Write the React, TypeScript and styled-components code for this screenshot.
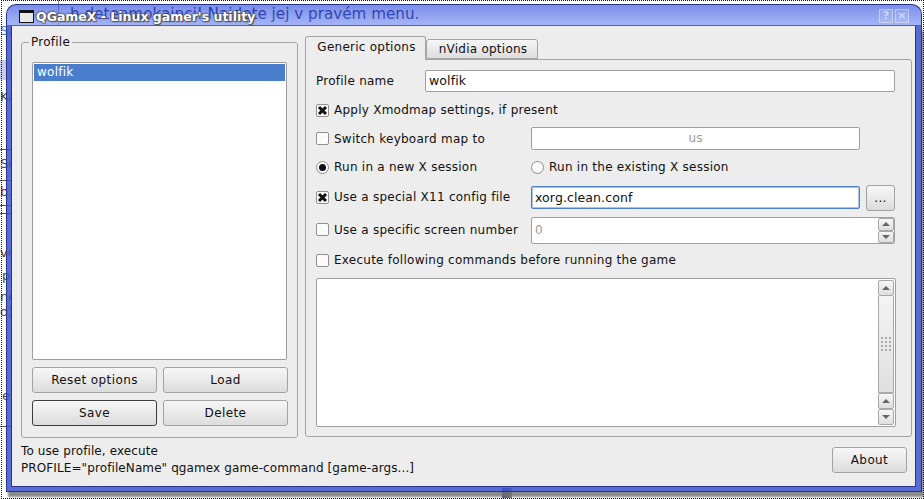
import styled, { createGlobalStyle } from 'styled-components'

const GlobalStyle = createGlobalStyle`
  html, body {
    margin: 0;
    padding: 0;
    background: #fff;
  }
  * {
    box-sizing: border-box;
  }
`

const Desktop = styled.div`
  position: relative;
  width: 924px;
  height: 499px;
  overflow: hidden;
  background: #fff;
  padding: 4px 2px 7px 6px;
  font-family: 'DejaVu Sans', sans-serif;
  font-size: 12px;
  letter-spacing: 0.25px;
  color: #111;
`

const SelectionEdge = styled.div`
  position: absolute;
  inset: 0 0 0 1px;
  border: 1px dotted #111;
  pointer-events: none;
`

const GhostText = styled.span<{ $x: number; $y: number; $size?: number; $color?: string }>`
  position: absolute;
  left: ${p => p.$x}px;
  top: ${p => p.$y}px;
  font-size: ${p => p.$size || 13}px;
  letter-spacing: 0;
  color: ${p => p.$color || '#444'};
  white-space: nowrap;
`

const GhostLine = styled.div<{ $y: number }>`
  position: absolute;
  left: 0;
  top: ${p => p.$y}px;
  width: 12px;
  height: 1px;
  background: #555;
`

const GhostBlock = styled.div<{ $x: number; $y: number; $w: number; $h: number; $color: string }>`
  position: absolute;
  left: ${p => p.$x}px;
  top: ${p => p.$y}px;
  width: ${p => p.$w}px;
  height: ${p => p.$h}px;
  background: ${p => p.$color};
`

const Window = styled.div`
  position: relative;
  width: 100%;
  height: 100%;
  display: flex;
  flex-direction: column;
`

const TitleBar = styled.div`
  height: 22px;
  flex: none;
  display: flex;
  align-items: center;
  padding: 2px 12px 0 12px;
  border: 1px solid #27358f;
  border-bottom: 1px solid #5560a8;
  border-radius: 10px 10px 0 0;
  background: linear-gradient(rgba(35, 68, 217, 0.6), rgba(105, 130, 242, 0.6));
`

const TitleIcon = styled.div`
  width: 15px;
  height: 13px;
  border: 1px solid #111;
  border-top-width: 3px;
  background: #e8e8e8;
  margin-right: 2px;
`

const TitleText = styled.div`
  flex: 1;
  font-weight: bold;
  font-size: 12.5px;
  letter-spacing: 0;
  color: #fff;
  text-shadow: 1px 1px 1px #555, 0 0 2px #333, 0 0 2px #333;
  white-space: nowrap;
`

const TitleButton = styled.div`
  width: 14px;
  height: 14px;
  margin-left: 2px;
  border: 1px solid rgba(255, 255, 255, 0.4);
  color: rgba(255, 255, 255, 0.55);
  font-size: 11px;
  font-weight: bold;
  line-height: 12px;
  text-align: center;
  background: rgba(255, 255, 255, 0.12);
`

const Frame = styled.div`
  flex: 1;
  display: flex;
  min-height: 0;
  padding: 0 5px 4px 4px;
  background: rgba(60, 82, 205, 0.85);
  border: 1px solid #27358f;
  border-top: none;
  box-shadow: 2px 5px 2px 0 rgba(110, 110, 110, 0.8);
`

const Client = styled.div`
  flex: 1;
  min-width: 0;
  background: #ededed;
  border: 1px solid #27358f;
  border-top: none;
  display: flex;
  flex-direction: column;
  padding: 10px 3px 0 9px;
`

const TopArea = styled.div`
  display: flex;
  height: 402px;
  flex: none;
  gap: 7px;
`

const GroupBox = styled.fieldset`
  width: 277px;
  height: 402px;
  margin: 0;
  padding: 15px 10px 11px 10px;
  border: 1px solid #a4a4a4;
  border-radius: 3px;
  display: flex;
  flex-direction: column;
  gap: 7px;
  min-width: 0;

  & > legend {
    margin-left: -3px;
    padding: 0 2px;
    line-height: 12px;
    font-size: 12px;
  }
`

const ProfileList = styled.div`
  height: 298px;
  margin-top: -1px;
  flex: none;
  background: #fff;
  border: 1px solid #9c9c9c;
  border-radius: 2px;
  padding: 1px;
`

const ProfileItem = styled.div`
  height: 17px;
  line-height: 16px;
  padding-left: 3px;
  background: #4a7dcb;
  color: #fff;
`

const ButtonGrid = styled.div`
  display: grid;
  grid-template-columns: 125px 125px;
  grid-auto-rows: 26px;
  gap: 7px 6px;
`

const PushButton = styled.button<{ $isDefault?: boolean }>`
  font: inherit;
  font-size: 12px;
  letter-spacing: 0.4px;
  color: #111;
  padding: 0;
  border: 1px solid ${p => (p.$isDefault ? '#3c3c3c' : '#a2a2a2')};
  border-radius: 3px;
  background: linear-gradient(#f7f7f7, #dcdcdc);
`

const BrowseButton = styled(PushButton)`
  width: 30px;
  height: 26px;
  margin-left: 6px;
  line-height: 18px;
  align-self: flex-start;
`

const AboutButton = styled(PushButton)`
  width: 75px;
  height: 26px;
`

const TabColumn = styled.div`
  flex: 1;
  display: flex;
  flex-direction: column;
  min-width: 0;
`

const TabRow = styled.div`
  height: 23px;
  flex: none;
  display: flex;
  align-items: flex-end;
  position: relative;
  z-index: 1;
`

const Tab = styled.div<{ $active?: boolean }>`
  height: ${p => (p.$active ? 24 : 20)}px;
  width: ${p => (p.$active ? 121 : 112)}px;
  margin-bottom: ${p => (p.$active ? -1 : 0)}px;
  padding: ${p => (p.$active ? 3 : 2)}px 0 0 2px;
  text-align: center;
  line-height: 14px;
  border: 1px solid #a4a4a4;
  border-bottom: ${p => (p.$active ? 'none' : '1px solid #a4a4a4')};
  border-radius: 3px 3px 0 0;
  background: ${p => (p.$active ? '#ededed' : 'linear-gradient(#f6f6f6, #dddddd)')};
`

const TabPanel = styled.div`
  width: 607px;
  height: 378px;
  flex: none;
  border: 1px solid #a4a4a4;
  border-radius: 0 3px 3px 3px;
  padding: 10px 16px 9px 10px;
  display: flex;
  flex-direction: column;
`

const Row = styled.div<{ $height: number; $gap?: number }>`
  height: ${p => p.$height}px;
  margin-bottom: ${p => p.$gap || 0}px;
  flex: none;
  display: flex;
  align-items: center;
`

const RowLabel = styled.label<{ $width?: number; $lift?: boolean }>`
  flex: none;
  width: ${p => (p.$width ? `${p.$width}px` : 'auto')};
  margin-bottom: ${p => (p.$lift ? 2 : 0)}px;
  display: flex;
  align-items: center;
  white-space: nowrap;
`

const CheckBox = styled.span`
  width: 13px;
  height: 13px;
  margin: 0 5px 0 0;
  flex: none;
  border: 1px solid #8f8f8f;
  border-radius: 2px;
  background: #fbfbfb;
  display: flex;
  align-items: center;
  justify-content: center;
`

const RadioButton = styled.span`
  width: 13px;
  height: 13px;
  margin: 0 5px 0 0;
  flex: none;
  border: 1px solid #8f8f8f;
  border-radius: 50%;
  background: #fbfbfb;
  display: flex;
  align-items: center;
  justify-content: center;
`

const RadioDot = styled.span`
  width: 7px;
  height: 7px;
  border-radius: 50%;
  background: #111;
`

const TextField = styled.div<{ $width: number; $height: number; $focused?: boolean; $muted?: boolean }>`
  flex: none;
  width: ${p => p.$width}px;
  height: ${p => p.$height}px;
  margin-bottom: ${p => (p.$focused ? 1 : 0)}px;
  line-height: ${p => p.$height - 2}px;
  padding-left: 3px;
  background: #fff;
  border: 1px solid ${p => (p.$focused ? '#4a7dcb' : '#a0a0a0')};
  box-shadow: ${p => (p.$focused ? 'inset 0 0 0 1px #a9c2ea' : 'none')};
  border-radius: 2px;
  color: ${p => (p.$muted ? '#999' : '#111')};
  font-size: 12.5px;
  letter-spacing: 0.1px;
`

const ComboValue = styled(TextField)`
  text-align: center;
  padding-left: 0;
  font-size: 12px;
`

const SpinBox = styled.div`
  flex: none;
  width: 364px;
  height: 27px;
  display: flex;
  background: #fff;
  border: 1px solid #a0a0a0;
  border-radius: 2px;
`

const SpinValue = styled.div`
  flex: 1;
  line-height: 25px;
  padding-left: 3px;
  color: #999;
`

const SpinButtons = styled.div`
  width: 16px;
  display: flex;
  flex-direction: column;
`

const ArrowButton = styled.div<{ $height?: number }>`
  flex: ${p => (p.$height ? 'none' : 1)};
  height: ${p => (p.$height ? `${p.$height}px` : 'auto')};
  display: flex;
  align-items: center;
  justify-content: center;
  background: linear-gradient(#f7f7f7, #dedede);
  border: 1px solid #a8a8a8;
  border-radius: 2px;
`

const Arrow = styled.span<{ $down?: boolean }>`
  width: 0;
  height: 0;
  border-left: 4px solid transparent;
  border-right: 4px solid transparent;
  border-${p => (p.$down ? 'top' : 'bottom')}: 4px solid #666;
`

const CommandBox = styled.div`
  width: 580px;
  height: 149px;
  flex: none;
  background: #fff;
  border: 1px solid #a0a0a0;
  border-radius: 2px;
  display: flex;
  justify-content: flex-end;
  padding: 1px;
`

const ScrollBar = styled.div`
  width: 16px;
  display: flex;
  flex-direction: column;
`

const ScrollThumb = styled.div`
  flex: 1;
  display: flex;
  align-items: center;
  justify-content: center;
  background: linear-gradient(#f3f3f3, #e0e0e0);
  border: 1px solid #a8a8a8;
  border-top: none;
`

const Grip = styled.div`
  width: 12px;
  height: 16px;
  background-image: radial-gradient(#aaa 0.8px, transparent 1px);
  background-size: 4px 4px;
`

const BottomArea = styled.div`
  flex: 1;
  display: flex;
  justify-content: space-between;
  align-items: flex-start;
  padding: 9px 5px 0 0;
`

const HelpText = styled.div`
  line-height: 17px;
  margin-top: -4px;
  letter-spacing: 0.1px;
`

const Checked = () => (
  <svg width="11" height="11" viewBox="0 0 11 11">
    <path d="M2 2 L9 9 M9 2 L2 9" stroke="#111" strokeWidth="3" />
  </svg>
)

export default function App() {
  return (
    <>
      <GlobalStyle />
      <Desktop>
        <GhostBlock $x={58} $y={0} $w={1} $h={26} $color="#999" />
        <GhostBlock $x={0} $y={60} $w={12} $h={20} $color="#c6cde6" />
        <GhostBlock $x={502} $y={488} $w={10} $h={10} $color="linear-gradient(90deg, #4a56a8, #777 70%, #999)" />
        <GhostText $x={70} $y={5} $size={15.2} $color="#141a6a">h detenmokajnci! Najdete jej v pravém menu.</GhostText>
        <GhostText $x={0} $y={23} $color="#4a7dcb">Sa</GhostText>
        <GhostText $x={0} $y={89}>Ka</GhostText>
        <GhostText $x={0} $y={156}>Se</GhostText>
        <GhostText $x={0} $y={184} $color="#8a1f2a">b.</GhostText>
        <GhostText $x={0} $y={245}>vo</GhostText>
        <GhostText $x={2} $y={268}>p</GhostText>
        <GhostText $x={0} $y={289}>ne</GhostText>
        <GhostText $x={0} $y={304}>o)</GhostText>
        <GhostText $x={2} $y={388}>e</GhostText>
        <GhostLine $y={149} />
        <GhostLine $y={180} />
        <GhostLine $y={205} />
        <GhostLine $y={213} />
        <GhostLine $y={426} />
        <Window>
          <TitleBar>
            <TitleIcon />
            <TitleText>QGameX - Linux gamer's utility</TitleText>
            <TitleButton>?</TitleButton>
            <TitleButton>×</TitleButton>
          </TitleBar>
          <Frame>
            <Client>
              <TopArea>
                <GroupBox>
                  <legend>Profile</legend>
                  <ProfileList>
                    <ProfileItem>wolfik</ProfileItem>
                  </ProfileList>
                  <ButtonGrid>
                    <PushButton>Reset options</PushButton>
                    <PushButton>Load</PushButton>
                    <PushButton $isDefault>Save</PushButton>
                    <PushButton>Delete</PushButton>
                  </ButtonGrid>
                </GroupBox>
                <TabColumn>
                  <TabRow>
                    <Tab $active>Generic options</Tab>
                    <Tab>nVidia options</Tab>
                  </TabRow>
                  <TabPanel>
                    <Row $height={22} $gap={10}>
                      <RowLabel $width={109}>Profile name</RowLabel>
                      <TextField $width={470} $height={22}>wolfik</TextField>
                    </Row>
                    <Row $height={16} $gap={9}>
                      <RowLabel>
                        <CheckBox><Checked /></CheckBox>
                        Apply Xmodmap settings, if present
                      </RowLabel>
                    </Row>
                    <Row $height={23} $gap={9}>
                      <RowLabel $width={215}>
                        <CheckBox />
                        Switch keyboard map to
                      </RowLabel>
                      <ComboValue $width={329} $height={23} $muted>us</ComboValue>
                    </Row>
                    <Row $height={16} $gap={10}>
                      <RowLabel $width={215}>
                        <RadioButton><RadioDot /></RadioButton>
                        Run in a new X session
                      </RowLabel>
                      <RowLabel>
                        <RadioButton />
                        Run in the existing X session
                      </RowLabel>
                    </Row>
                    <Row $height={26} $gap={6}>
                      <RowLabel $width={215} $lift>
                        <CheckBox><Checked /></CheckBox>
                        Use a special X11 config file
                      </RowLabel>
                      <TextField $width={329} $height={23} $focused>xorg.clean.conf</TextField>
                      <BrowseButton>...</BrowseButton>
                    </Row>
                    <Row $height={27} $gap={8}>
                      <RowLabel $width={215} $lift>
                        <CheckBox />
                        Use a specific screen number
                      </RowLabel>
                      <SpinBox>
                        <SpinValue>0</SpinValue>
                        <SpinButtons>
                          <ArrowButton><Arrow /></ArrowButton>
                          <ArrowButton><Arrow $down /></ArrowButton>
                        </SpinButtons>
                      </SpinBox>
                    </Row>
                    <Row $height={16} $gap={10}>
                      <RowLabel>
                        <CheckBox />
                        Execute following commands before running the game
                      </RowLabel>
                    </Row>
                    <CommandBox>
                      <ScrollBar>
                        <ArrowButton $height={16}><Arrow /></ArrowButton>
                        <ScrollThumb><Grip /></ScrollThumb>
                        <ArrowButton $height={16}><Arrow /></ArrowButton>
                        <ArrowButton $height={16}><Arrow $down /></ArrowButton>
                      </ScrollBar>
                    </CommandBox>
                  </TabPanel>
                </TabColumn>
              </TopArea>
              <BottomArea>
                <HelpText>
                  To use profile, execute
                  <br />
                  PROFILE="profileName" qgamex game-command [game-args...]
                </HelpText>
                <AboutButton>About</AboutButton>
              </BottomArea>
            </Client>
          </Frame>
        </Window>
        <SelectionEdge />
      </Desktop>
    </>
  )
}
